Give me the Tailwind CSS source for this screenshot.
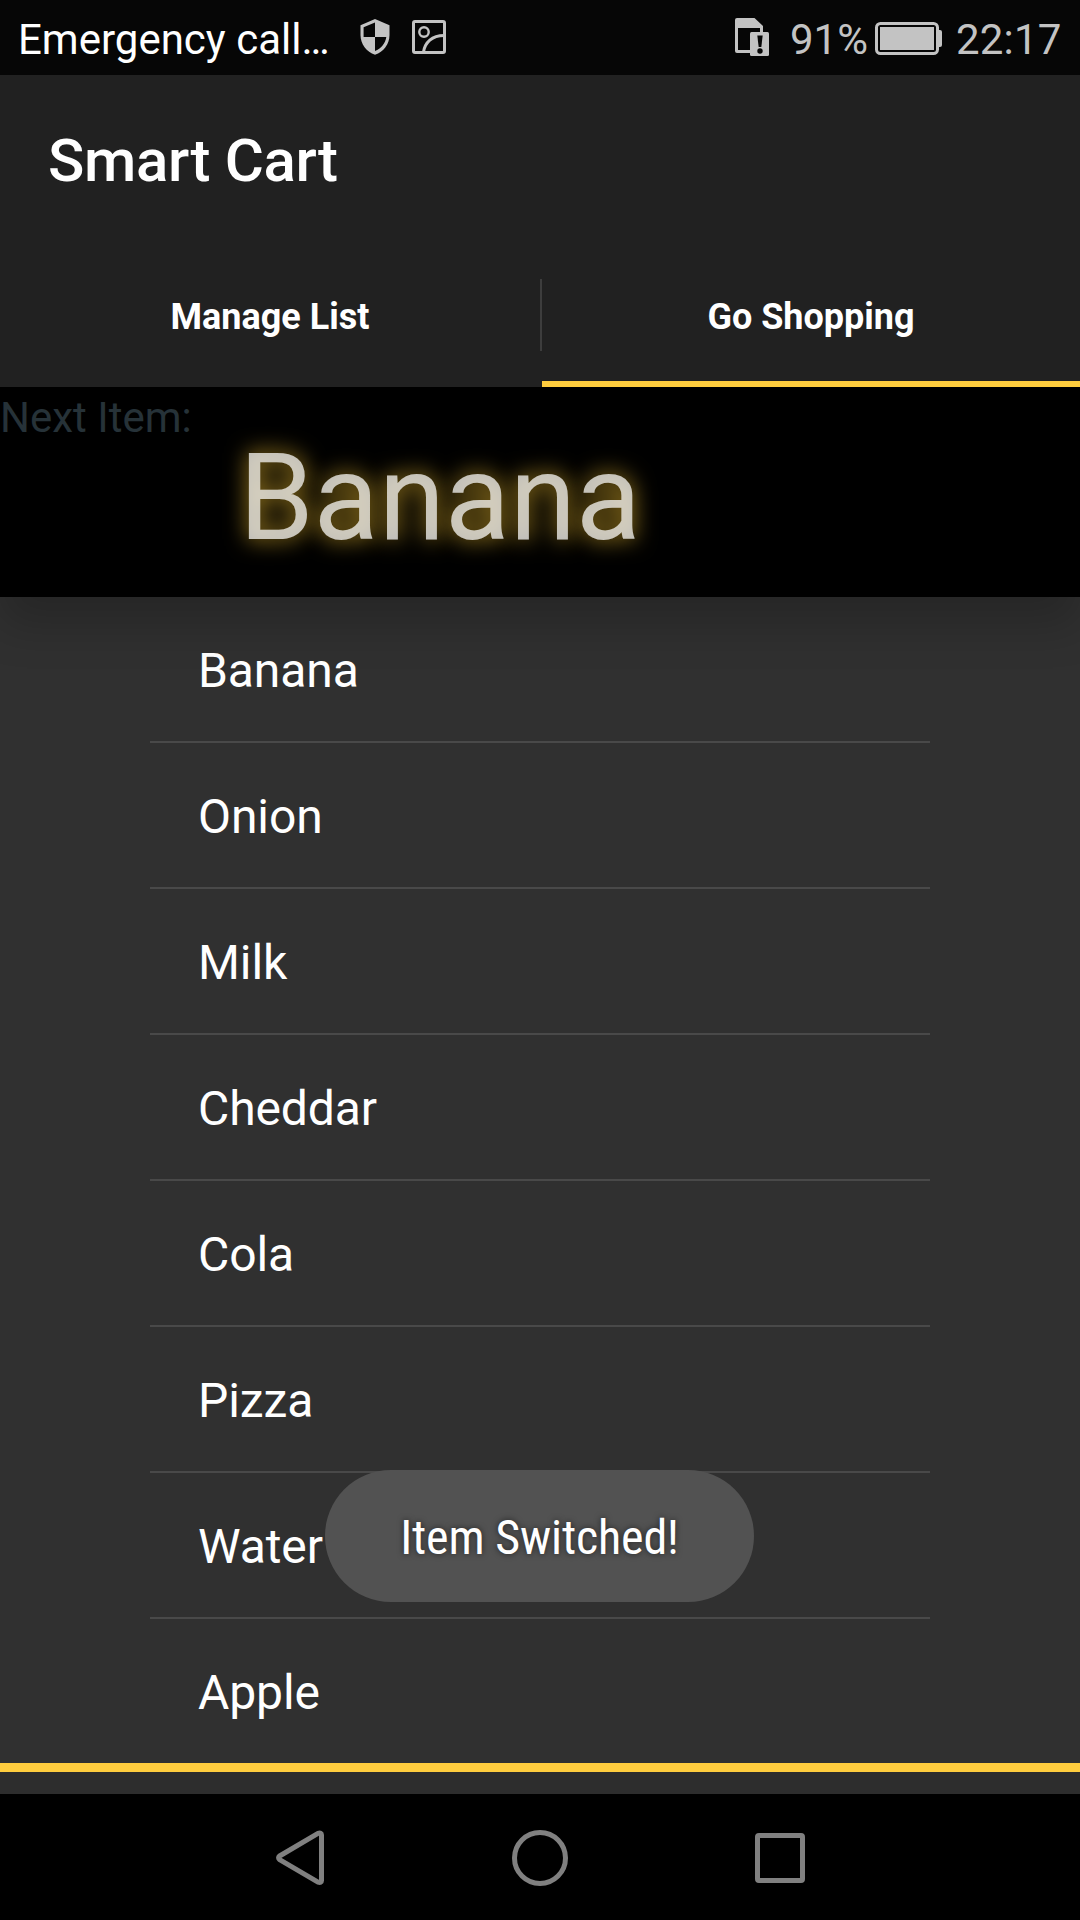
<!DOCTYPE html>
<html lang="en">
<head>
<meta charset="utf-8">
<title>Smart Cart</title>
<script src="https://cdn.jsdelivr.net/npm/@tailwindcss/browser@4"></script>
</head>
<body class="bg-[#303030]">
<div class="relative flex h-[1920px] w-[1080px] flex-col overflow-hidden bg-[#303030] font-['Roboto',sans-serif] text-white">

  <!-- Status bar -->
  <div class="flex h-[75px] shrink-0 items-start bg-[#060606] pl-[18px] text-[42px] leading-[49px] text-[#c3c3c3]">
    <div class="w-[342px] pt-[15px] whitespace-nowrap text-white">Emergency call…</div>
    <svg class="mt-[19px] h-9 w-[30px]" viewBox="0 0 30 36">
      <path d="M15 0 29.5 6.3V16C29.5 25 23.500 33 15 35.700 6.500 33 .5 25 .5 16V6.300Z" fill="#c3c3c3"/>
      <path d="M15 3.600V18H3.600V8.300ZM15 18H26.300C25.500 24.300 21 29.800 15 32Z" fill="#060606"/>
    </svg>
    <svg class="mt-5 ml-[22px] h-[34px] w-[34px]" viewBox="0 0 34 34" fill="none" stroke="#c3c3c3" stroke-width="3">
      <rect x="1.500" y="1.500" width="31" height="31" rx="1.500"/>
      <circle cx="12" cy="12" r="4.700" stroke-width="2.400"/>
      <path d="M11.500 32C13 22.500 20 15.500 32 15.500"/>
    </svg>
    <svg class="mt-[18px] ml-[289px] h-[38px] w-[34px]" viewBox="0 0 34 38">
      <path d="M2 0H19.500L28 8V14H25V10H3V32H15V35H2Q0 35 0 33V2Q0 0 2 0Z" fill="#c3c3c3"/>
      <rect x="15" y="14" width="19" height="24" rx="1.500" fill="#c3c3c3"/>
      <path d="M22.300 17.500H27.700L26.300 29H23.700Z" fill="#060606"/>
      <circle cx="25" cy="33" r="2.700" fill="#060606"/>
    </svg>
    <div class="ml-[21px] w-[85px] pt-[15px]">91%</div>
    <svg class="mt-[22px] h-[33px] w-[67px]" viewBox="0 0 67 33">
      <rect x="1.500" y="1.500" width="61" height="30" rx="4" fill="none" stroke="#c3c3c3" stroke-width="3"/>
      <rect x="5" y="5" width="54" height="23" fill="#c3c3c3"/>
      <path d="M64 8H65Q67 8 67 10V23Q67 25 65 25H64Z" fill="#c3c3c3"/>
    </svg>
    <div class="ml-[14px] pt-[15px] tracking-[0.2px]">22:17</div>
  </div>

  <!-- App bar -->
  <div class="flex h-[312px] shrink-0 flex-col bg-[#212121]">
    <h1 class="h-[168px] pt-[51px] pl-12 text-[60px] leading-[70px] font-medium tracking-[-0.3px]">Smart Cart</h1>
    <div class="flex h-[144px] text-4xl leading-[42px] font-bold">
      <div class="flex w-[540px] justify-center pt-[53px]">Manage List</div>
      <div class="mt-9 h-[72px] w-[2px] bg-[#3d3d3d]"></div>
      <div class="flex flex-1 justify-center border-b-[6px] border-[#ffcd3e] pt-[53px]">Go Shopping</div>
    </div>
  </div>

  <!-- Next item banner -->
  <div class="z-10 h-[210px] shrink-0 bg-black shadow-[0_28px_42px_rgba(0,0,0,0.2)] [clip-path:inset(0_0_-80px_0)]">
    <div class="h-[41px] pt-[6px] text-[42px] leading-[49px] text-[#263238]">Next Item:</div>
    <div class="pl-[239px] text-[120px] leading-[140px] tracking-[-0.2px] text-white/72 [text-shadow:0_0_22px_rgba(255,202,50,0.72)]">Banana</div>
  </div>

  <!-- Shopping list -->
  <div class="mx-[150px] flex h-[1166px] shrink-0 flex-col divide-y-2 divide-[#494949] text-[48px] leading-[56px] tracking-[-0.1px]">
    <div class="h-[146px] pt-[46px] pl-12">Banana</div>
    <div class="h-[146px] pt-[46px] pl-12">Onion</div>
    <div class="h-[146px] pt-[46px] pl-12">Milk</div>
    <div class="h-[146px] pt-[46px] pl-12">Cheddar</div>
    <div class="h-[146px] pt-[46px] pl-12">Cola</div>
    <div class="h-[146px] pt-[46px] pl-12">Pizza</div>
    <div class="h-[146px] pt-[46px] pl-12">Water</div>
    <div class="h-[144px] pt-[46px] pl-12">Apple</div>
  </div>
  <div class="h-[9px] shrink-0 bg-[#ffcd3e]"></div>
  <div class="h-[22px] shrink-0 bg-[#2d2d2d]"></div>

  <!-- Navigation bar -->
  <div class="flex h-[126px] shrink-0 items-start bg-black pt-9 pl-[276px]">
    <svg class="h-14 w-12" viewBox="0 0 48 56" fill="none" stroke="#808080" stroke-width="5" stroke-linejoin="round">
      <path d="M3.600 26 42 3.300Q45.500 2.300 45.500 5V50.500Q45.500 53.200 42 52.200L3.600 29.600Q1.500 27.800 3.600 26Z"/>
    </svg>
    <svg class="ml-[188px] h-14 w-14" viewBox="0 0 56 56" fill="none" stroke="#808080" stroke-width="5"><circle cx="28" cy="28" r="25.500"/></svg>
    <div class="mt-[3px] ml-[187px] size-[50px] rounded-[4px] border-5 border-[#808080]"></div>
  </div>

  <!-- Toast -->
  <div class="absolute top-[1470px] left-[325px] z-20 flex h-[132px] w-[429px] justify-center rounded-full bg-[#525252] pt-[40px]">
    <span class="font-['Roboto_Condensed','Roboto',sans-serif] text-[48px] leading-[56px] tracking-[-0.15px] whitespace-nowrap [text-shadow:0_0_6px_rgba(0,0,0,0.6)]">Item Switched!</span>
  </div>
</div>
</body>
</html>
